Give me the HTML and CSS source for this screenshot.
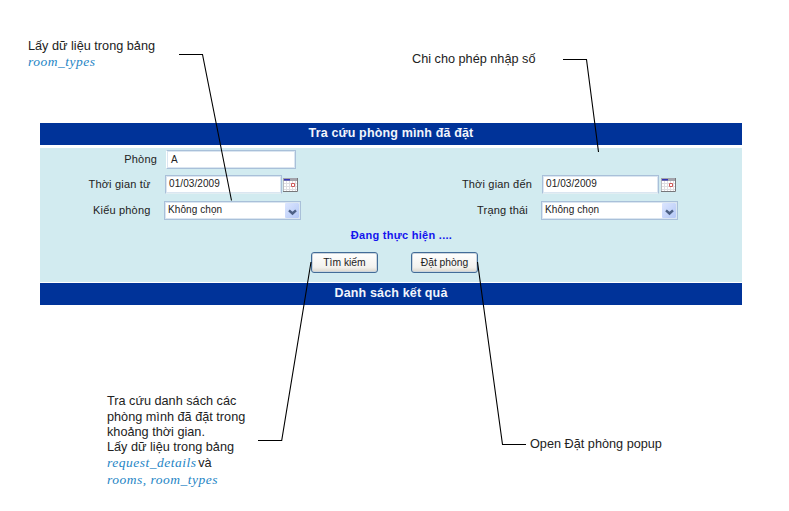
FILE: index.html
```html
<!DOCTYPE html>
<html lang="vi">
<head>
<meta charset="utf-8">
<title>Tra cứu phòng mình đã đặt</title>
<link rel="stylesheet" href="styles.css">
</head>
<body>
<svg class="defs" width="0" height="0" aria-hidden="true">
  <symbol id="calendar" viewBox="0 0 15 14">
    <path fill="#fff" d="M0 0h15v14H0z"/>
    <path fill="#dedee2" d="M3 3h1v10H3zM6 3h1v10H6zM9 3h1v10H9zM12 3h1v10h-1zM1 5h13v1H1zM1 8h13v1H1zM1 11h13v1H1z"/>
    <path fill="#a3a3ab" d="M0 0h15v3H0z"/>
    <path fill="#3434b4" d="M1 1h6v1.500H1z"/>
    <path fill="#fff" stroke="#d05a5a" d="M8.500 5.500h3v3h-3z"/>
    <path fill="none" stroke="#77777a" d="M14.500 0v13.500H0"/>
    <path fill="none" stroke="#bbbbc0" d="M.5 3v10"/>
  </symbol>
  <symbol id="chevron" viewBox="0 0 9 7">
    <path fill="none" stroke="#4d6185" stroke-width="2.400" d="M1 1.300l3.500 3.200L8 1.300"/>
  </symbol>
</svg>
<main class="panel">
  <h1 class="bar">Tra cứu phòng mình đã đặt</h1>
  <form class="body">
    <div class="columns">
      <div class="column">
        <div class="row first"><label class="label">Phòng</label><span class="field name">A</span></div>
        <div class="row"><label class="label">Thời gian từ</label><span class="field date">01/03/2009</span><svg class="cal"><use href="#calendar"/></svg></div>
        <div class="row"><label class="label">Kiểu phòng</label><span class="field select">Không chọn<span class="arrow"><svg><use href="#chevron"/></svg></span></span></div>
      </div>
      <div class="column right">
        <div class="row first"></div>
        <div class="row"><label class="label">Thời gian đến</label><span class="field date">01/03/2009</span><svg class="cal"><use href="#calendar"/></svg></div>
        <div class="row"><label class="label status-label">Trạng thái</label><span class="field select">Không chọn<span class="arrow"><svg><use href="#chevron"/></svg></span></span></div>
      </div>
    </div>
    <p class="progress">Đang thực hiện ....</p>
    <div class="actions">
      <button type="button">Tìm kiếm</button>
      <button type="button">Đặt phòng</button>
    </div>
  </form>
  <h2 class="bar">Danh sách kết quả</h2>
</main>
<p class="note types">Lấy dữ liệu trong bảng<br><em>room_types</em></p>
<p class="note numeric">Chi cho phép nhập số</p>
<p class="note search">Tra cứu danh sách các<br>phòng mình đã đặt trong<br>khoảng thời gian.<br>Lấy dữ liệu trong bảng<br><em>request_details</em><span class="and"> và</span><br><em>rooms, room_types</em></p>
<p class="note popup">Open Đặt phòng popup</p>
<svg class="leaders" width="789" height="511" viewBox="0 0 789 511">
  <path d="M179 54.500h23.500L231.500 200.500"/>
  <path d="M563 59.500h23.500L598.500 152"/>
  <path d="M311 262L281.700 440.500H258"/>
  <path d="M477.500 262L502.500 444.500H526"/>
</svg>
</body>
</html>
```
FILE: styles.css
```css
* { box-sizing: border-box; }
body {
  margin: 0;
  width: 789px;
  height: 511px;
  position: relative;
  overflow: hidden;
  background: #fff;
  color: #222;
  font-family: "Liberation Sans", Arial, sans-serif;
}
.defs { position: absolute; }
.panel { width: 702px; margin-left: 40px; padding-top: 123px; }
.bar {
  height: 22px;
  margin: 0;
  background: #003399;
  color: #f2f5fc;
  font-size: 12.500px;
  line-height: 21px;
  text-align: center;
  letter-spacing: .15px;
}
.body {
  height: 134px;
  margin: 3px 0 1px;
  background: #d2ebf0;
}
.columns { display: flex; }
.column { width: 377px; }
.column.right { width: 325px; }
.row { display: flex; height: 26px; align-items: flex-start; font-size: 11px; }
.row.first { height: 27px; padding-top: 2px; }
.label {
  width: 110.500px;
  margin-right: 14.500px;
  text-align: right;
  line-height: 19px;
  letter-spacing: .18px;
  white-space: nowrap;
}
.first .label { width: 117px; margin-right: 9px; }
.right .label { width: 115px; margin-right: 10px; }
.right .status-label { width: 111px; margin-right: 13px; }
.field {
  display: flex;
  height: 19px;
  padding-left: 3px;
  background: #fff;
  border: 1px solid #a9c0d9;
  box-shadow: inset 0 0 0 1px #dbe6f1;
  font-size: 10px;
  line-height: 16px;
  letter-spacing: .08px;
  white-space: nowrap;
}
.name { width: 130px; padding-left: 4px; border-left-color: #fff; line-height: 17px; }
.date { width: 117px; border-bottom-color: #e2eef2; }
.cal { width: 15px; height: 14px; margin: 3px 0 0 1px; }
.right .cal { margin-left: 2px; }
.select { width: 137px; margin-left: -1px; padding: 0 1px 0 3px; justify-content: space-between; }
.right .select { margin-left: 0; }
.arrow {
  display: flex;
  width: 14px;
  height: 15px;
  margin-top: 1px;
  align-items: center;
  justify-content: center;
  background: linear-gradient(135deg, #dce6ff, #b4c8f6);
  border-radius: 1px;
}
.arrow svg { width: 9px; height: 7px; margin-top: 3px; }
.progress {
  height: 25px;
  margin: 0 0 0 21px;
  color: #1414ee;
  font-size: 11px;
  font-weight: bold;
  line-height: 16px;
  text-align: center;
  letter-spacing: .28px;
}
.actions { display: flex; gap: 33px; padding-left: 271px; }
button {
  width: 67px;
  height: 21px;
  padding: 0 0 1px;
  border: 1px solid #426c98;
  border-radius: 3px;
  background: linear-gradient(#fff, #f3f2ee 75%, #d9d5ca);
  box-shadow: inset 0 0 0 1px #ccd5dc;
  color: #222;
  font: 10.300px "Liberation Sans", Arial, sans-serif;
  white-space: nowrap;
}
.note {
  position: absolute;
  margin: 0;
  font-size: 12.700px;
  line-height: 15.300px;
  white-space: nowrap;
}
.note em { color: #2585c5; font-family: "Liberation Serif", "Times New Roman", serif; font-size: 13.500px; letter-spacing: .5px; }
.note .and { word-spacing: -1.800px; }
.types { left: 28px; top: 39px; }
.numeric { left: 412px; top: 52px; }
.search { left: 107px; top: 394.300px; }
.popup { left: 530px; top: 437px; }
.leaders { position: absolute; left: 0; top: 0; fill: none; stroke: #000; stroke-width: 1.100; pointer-events: none; }
```
